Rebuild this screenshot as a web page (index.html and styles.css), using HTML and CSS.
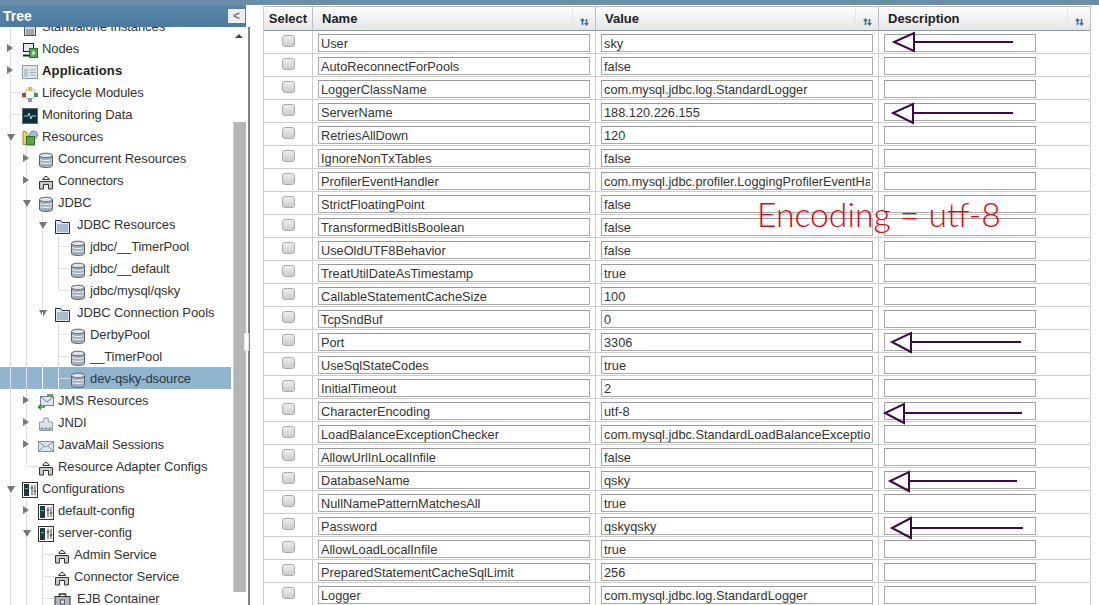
FILE: index.html
```html
<!DOCTYPE html>
<html>
<head>
<meta charset="UTF-8">
<title>Connection Pool Properties</title>
<link rel="stylesheet" href="styles.css">
</head>
<body>
<svg class="defs" width="0" height="0">
	<symbol id="db" viewBox="0 0 16 16">
		<path d="M1.500 3.500v10c0 1.200 2.900 2 6.500 2s6.500-.8 6.500-2v-10z" fill="#a3afba" stroke="#56626d"/>
		<ellipse cx="8" cy="3.500" rx="6.500" ry="2.300" fill="#dfe5ea" stroke="#56626d"/>
		<path d="M2 7.500c1 1.200 11 1.200 12 0M2 10.500c1 1.200 11 1.200 12 0" fill="none" stroke="#eef2f5"/>
	</symbol>
	<symbol id="folder" viewBox="0 0 16 16">
		<path d="M1 2.500h5l1.500 2H15v11H1z" fill="#dce7f0" stroke="#22303c"/>
		<path d="M2.500 6h11v8h-11z" fill="#a3bdd2"/>
	</symbol>
	<symbol id="conn" viewBox="0 0 16 16">
		<path d="M4.500 5.500L7 2.500h2l2.500 3z" fill="#e6e6e6" stroke="#333"/>
		<path d="M1.500 15V7.500h13V15h-4v-4.500h-5V15z" fill="#c9c9c9" stroke="#333"/>
	</symbol>
	<symbol id="cfg" viewBox="0 0 16 16">
		<rect x=".5" y=".5" width="15" height="15" fill="#fff" stroke="#333"/>
		<rect x="2" y="2" width="5" height="12" fill="#1f3a44"/>
		<rect x="3" y="6" width="3" height="1" fill="#5ccf8f"/>
		<path d="M10 3v10M13 3v10M8.500 6h3M11.500 9h3" stroke="#444" fill="none"/>
	</symbol>
	<symbol id="nodes" viewBox="0 0 16 16">
		<rect x="1.500" y="1.500" width="10" height="8" fill="#e4e8ea" stroke="#222"/>
		<path d="M1 13.500h9" stroke="#222" stroke-width="2"/>
		<rect x="7.500" y="6.500" width="8" height="9" fill="#4ea74a" stroke="#2c6d2a"/>
		<path d="M10.500 8.500l3 2.500-3 2.500z" fill="#fff"/>
	</symbol>
	<symbol id="apps" viewBox="0 0 16 16">
		<rect x=".5" y="1.500" width="15" height="13" fill="#dfe7ee" stroke="#8a9aa8"/>
		<rect x="2" y="5" width="4" height="8" fill="#b7c7d4"/>
		<path d="M7.500 6h6.500M7.500 8.500h6.500M7.500 11h6.500" stroke="#9db0c0"/>
	</symbol>
	<symbol id="life" viewBox="0 0 16 16">
		<circle cx="8" cy="8" r="5.500" fill="none" stroke="#9aa8b4"/>
		<rect x="6" y="1" width="4" height="4" fill="#e8b93a"/>
		<rect x="12" y="7" width="4" height="4" fill="#3c9a48"/>
		<rect x="6" y="12" width="4" height="4" fill="#8a99a8"/>
		<rect x="0" y="7" width="4" height="4" fill="#cf3a30"/>
	</symbol>
	<symbol id="mon" viewBox="0 0 16 16">
		<rect x=".5" y=".5" width="15" height="15" fill="#12303a" stroke="#666"/>
		<path d="M2 8h4l1-3 2 6 1-3h4" fill="none" stroke="#6fe0d0"/>
	</symbol>
	<symbol id="res" viewBox="0 0 16 16">
		<path d="M1 1.500h3l2 3v10H1z" fill="#f1cc62" stroke="#a8872c"/>
		<circle cx="11.500" cy="5" r="4" fill="#a9c3d8" stroke="#6c8aa2"/>
		<rect x="4.500" y="6.500" width="8" height="8.500" fill="#58a83f" stroke="#2f6d25"/>
	</symbol>
	<symbol id="jms" viewBox="0 0 16 16">
		<rect x="2.500" y="2.500" width="13" height="9" fill="#dbe6ee" stroke="#6e8496"/>
		<path d="M3 3l6 5 6-5" fill="none" stroke="#6e8496"/>
		<path d="M0 13h7M3 10.500L.5 13 3 15.500M9 1h6" stroke="#2f8a2a" stroke-width="1.500" fill="none"/>
	</symbol>
	<symbol id="jndi" viewBox="0 0 16 16">
		<path d="M6 2h4l1 4h3.500v8.500h-13V6H5z" fill="#d6e3ec" stroke="#8ba1b2"/>
		<path d="M3 14v-2h2v2M7 14v-2h2v2M11 14v-2h2v2" fill="none" stroke="#6e8496"/>
	</symbol>
	<symbol id="mail" viewBox="0 0 16 16">
		<rect x=".5" y="3.500" width="15" height="10" fill="#dbe6ee" stroke="#7f95a6"/>
		<path d="M1 4l7 5 7-5M1 13l5-5M15 13l-5-5" fill="none" stroke="#7f95a6"/>
	</symbol>
	<symbol id="std" viewBox="0 0 16 16">
		<rect x="2.500" y=".5" width="11" height="15" fill="#d5d5d5" stroke="#555"/>
		<path d="M4 10h8M4 12h8M4 14h8" stroke="#777"/>
	</symbol>
	<symbol id="ejb" viewBox="0 0 16 16">
		<path d="M5 4V2h6v2" fill="none" stroke="#333" stroke-width="1.500"/>
		<rect x=".5" y="4.500" width="15" height="11" fill="#aeb4bc" stroke="#333"/>
		<rect x="6" y="8" width="4" height="4" fill="#e4e8ec" stroke="#556"/>
	</symbol>
</svg>

<div class="topbar"></div>
<div class="page">
	<div class="side">
		<div class="side-head">
			<span class="side-title">Tree</span>
			<span class="collapse">&lt;</span>
		</div>
		<div class="side-body">
			<div class="tree">
				<ul class="root">
					<li><div class="row"><span class="tog leaf"></span><svg class="ico"><use href="#std"/></svg>Standalone Instances</div></li>
					<li><div class="row"><span class="tog closed"></span><svg class="ico"><use href="#nodes"/></svg>Nodes</div></li>
					<li><div class="row strong"><span class="tog closed"></span><svg class="ico"><use href="#apps"/></svg>Applications</div></li>
					<li><div class="row"><span class="tog leaf"></span><svg class="ico"><use href="#life"/></svg>Lifecycle Modules</div></li>
					<li><div class="row"><span class="tog leaf"></span><svg class="ico"><use href="#mon"/></svg>Monitoring Data</div></li>
					<li>
						<div class="row"><span class="tog opened"></span><svg class="ico"><use href="#res"/></svg>Resources</div>
						<ul class="sub">
							<li><div class="row"><span class="tog closed"></span><svg class="ico"><use href="#db"/></svg>Concurrent Resources</div></li>
							<li><div class="row"><span class="tog closed"></span><svg class="ico"><use href="#conn"/></svg>Connectors</div></li>
							<li>
								<div class="row"><span class="tog opened"></span><svg class="ico"><use href="#db"/></svg>JDBC</div>
								<ul class="sub">
									<li>
										<div class="row"><span class="tog opened"></span><svg class="ico wide"><use href="#folder"/></svg>JDBC Resources</div>
										<ul class="sub">
											<li><div class="row"><span class="tog leaf"></span><svg class="ico"><use href="#db"/></svg>jdbc/__TimerPool</div></li>
											<li><div class="row"><span class="tog leaf"></span><svg class="ico"><use href="#db"/></svg>jdbc/__default</div></li>
											<li class="end"><div class="row"><span class="tog leaf"></span><svg class="ico"><use href="#db"/></svg>jdbc/mysql/qsky</div></li>
										</ul>
									</li>
									<li class="end">
										<div class="row"><span class="tog opened"></span><svg class="ico wide"><use href="#folder"/></svg>JDBC Connection Pools</div>
										<ul class="sub">
											<li><div class="row"><span class="tog leaf"></span><svg class="ico"><use href="#db"/></svg>DerbyPool</div></li>
											<li><div class="row"><span class="tog leaf"></span><svg class="ico"><use href="#db"/></svg>__TimerPool</div></li>
											<li class="end"><div class="row sel"><span class="tog leaf"></span><svg class="ico"><use href="#db"/></svg>dev-qsky-dsource</div></li>
										</ul>
									</li>
								</ul>
							</li>
							<li><div class="row"><span class="tog closed"></span><svg class="ico"><use href="#jms"/></svg>JMS Resources</div></li>
							<li><div class="row"><span class="tog closed"></span><svg class="ico"><use href="#jndi"/></svg>JNDI</div></li>
							<li><div class="row"><span class="tog closed"></span><svg class="ico"><use href="#mail"/></svg>JavaMail Sessions</div></li>
							<li class="end"><div class="row"><span class="tog leaf"></span><svg class="ico"><use href="#conn"/></svg>Resource Adapter Configs</div></li>
						</ul>
					</li>
					<li>
						<div class="row"><span class="tog opened"></span><svg class="ico"><use href="#cfg"/></svg>Configurations</div>
						<ul class="sub">
							<li><div class="row"><span class="tog closed"></span><svg class="ico"><use href="#cfg"/></svg>default-config</div></li>
							<li>
								<div class="row"><span class="tog opened"></span><svg class="ico"><use href="#cfg"/></svg>server-config</div>
								<ul class="sub">
									<li><div class="row"><span class="tog leaf"></span><svg class="ico"><use href="#conn"/></svg>Admin Service</div></li>
									<li><div class="row"><span class="tog leaf"></span><svg class="ico"><use href="#conn"/></svg>Connector Service</div></li>
									<li><div class="row"><span class="tog leaf"></span><svg class="ico wide"><use href="#ejb"/></svg>EJB Container</div></li>
								</ul>
							</li>
						</ul>
					</li>
				</ul>
			</div>
			<div class="scroll">
				<span class="scroll-up"></span>
				<div class="thumb"></div>
			</div>
		</div>
	</div>
	<div class="split"><span class="grip"></span></div>

	<div class="main">
		<table class="props">
			<colgroup><col class="c-sel"><col class="c-val"><col class="c-val"><col class="c-desc"></colgroup>
			<thead>
				<tr>
					<th class="th-sel">Select</th>
					<th><div class="th-in"><span class="th-txt">Name</span><span class="sort"><svg width="9" height="8" viewBox="0 0 9 8"><path d="M2.500 0L5 3H3.300v4H1.700V3H0zM6.500 8L4 5h1.700V1h1.600v4H9z" fill="#3f6f96"/></svg></span></div></th>
					<th><div class="th-in"><span class="th-txt">Value</span><span class="sort"><svg width="9" height="8" viewBox="0 0 9 8"><path d="M2.500 0L5 3H3.300v4H1.700V3H0zM6.500 8L4 5h1.700V1h1.600v4H9z" fill="#3f6f96"/></svg></span></div></th>
					<th><div class="th-in"><span class="th-txt">Description</span><span class="sort"><svg width="9" height="8" viewBox="0 0 9 8"><path d="M2.500 0L5 3H3.300v4H1.700V3H0zM6.500 8L4 5h1.700V1h1.600v4H9z" fill="#3f6f96"/></svg></span></div></th>
				</tr>
			</thead>
			<tbody>
				<tr><td class="td-sel"><input class="chk" type="checkbox"></td><td><input class="txt" value="User"></td><td><input class="txt" value="sky"></td><td><input class="txt short"></td></tr>
				<tr><td class="td-sel"><input class="chk" type="checkbox"></td><td><input class="txt" value="AutoReconnectForPools"></td><td><input class="txt" value="false"></td><td><input class="txt short"></td></tr>
				<tr><td class="td-sel"><input class="chk" type="checkbox"></td><td><input class="txt" value="LoggerClassName"></td><td><input class="txt" value="com.mysql.jdbc.log.StandardLogger"></td><td><input class="txt short"></td></tr>
				<tr><td class="td-sel"><input class="chk" type="checkbox"></td><td><input class="txt" value="ServerName"></td><td><input class="txt" value="188.120.226.155"></td><td><input class="txt short"></td></tr>
				<tr><td class="td-sel"><input class="chk" type="checkbox"></td><td><input class="txt" value="RetriesAllDown"></td><td><input class="txt" value="120"></td><td><input class="txt short"></td></tr>
				<tr><td class="td-sel"><input class="chk" type="checkbox"></td><td><input class="txt" value="IgnoreNonTxTables"></td><td><input class="txt" value="false"></td><td><input class="txt short"></td></tr>
				<tr><td class="td-sel"><input class="chk" type="checkbox"></td><td><input class="txt" value="ProfilerEventHandler"></td><td><input class="txt" value="com.mysql.jdbc.profiler.LoggingProfilerEventHandler"></td><td><input class="txt short"></td></tr>
				<tr><td class="td-sel"><input class="chk" type="checkbox"></td><td><input class="txt" value="StrictFloatingPoint"></td><td><input class="txt" value="false"></td><td><input class="txt short"></td></tr>
				<tr><td class="td-sel"><input class="chk" type="checkbox"></td><td><input class="txt" value="TransformedBitIsBoolean"></td><td><input class="txt" value="false"></td><td><input class="txt short"></td></tr>
				<tr><td class="td-sel"><input class="chk" type="checkbox"></td><td><input class="txt" value="UseOldUTF8Behavior"></td><td><input class="txt" value="false"></td><td><input class="txt short"></td></tr>
				<tr><td class="td-sel"><input class="chk" type="checkbox"></td><td><input class="txt" value="TreatUtilDateAsTimestamp"></td><td><input class="txt" value="true"></td><td><input class="txt short"></td></tr>
				<tr><td class="td-sel"><input class="chk" type="checkbox"></td><td><input class="txt" value="CallableStatementCacheSize"></td><td><input class="txt" value="100"></td><td><input class="txt short"></td></tr>
				<tr><td class="td-sel"><input class="chk" type="checkbox"></td><td><input class="txt" value="TcpSndBuf"></td><td><input class="txt" value="0"></td><td><input class="txt short"></td></tr>
				<tr><td class="td-sel"><input class="chk" type="checkbox"></td><td><input class="txt" value="Port"></td><td><input class="txt" value="3306"></td><td><input class="txt short"></td></tr>
				<tr><td class="td-sel"><input class="chk" type="checkbox"></td><td><input class="txt" value="UseSqlStateCodes"></td><td><input class="txt" value="true"></td><td><input class="txt short"></td></tr>
				<tr><td class="td-sel"><input class="chk" type="checkbox"></td><td><input class="txt" value="InitialTimeout"></td><td><input class="txt" value="2"></td><td><input class="txt short"></td></tr>
				<tr><td class="td-sel"><input class="chk" type="checkbox"></td><td><input class="txt" value="CharacterEncoding"></td><td><input class="txt" value="utf-8"></td><td><input class="txt short"></td></tr>
				<tr><td class="td-sel"><input class="chk" type="checkbox"></td><td><input class="txt" value="LoadBalanceExceptionChecker"></td><td><input class="txt" value="com.mysql.jdbc.StandardLoadBalanceExceptionChecker"></td><td><input class="txt short"></td></tr>
				<tr><td class="td-sel"><input class="chk" type="checkbox"></td><td><input class="txt" value="AllowUrlInLocalInfile"></td><td><input class="txt" value="false"></td><td><input class="txt short"></td></tr>
				<tr><td class="td-sel"><input class="chk" type="checkbox"></td><td><input class="txt" value="DatabaseName"></td><td><input class="txt" value="qsky"></td><td><input class="txt short"></td></tr>
				<tr><td class="td-sel"><input class="chk" type="checkbox"></td><td><input class="txt" value="NullNamePatternMatchesAll"></td><td><input class="txt" value="true"></td><td><input class="txt short"></td></tr>
				<tr><td class="td-sel"><input class="chk" type="checkbox"></td><td><input class="txt" value="Password"></td><td><input class="txt" value="qskyqsky"></td><td><input class="txt short"></td></tr>
				<tr><td class="td-sel"><input class="chk" type="checkbox"></td><td><input class="txt" value="AllowLoadLocalInfile"></td><td><input class="txt" value="true"></td><td><input class="txt short"></td></tr>
				<tr><td class="td-sel"><input class="chk" type="checkbox"></td><td><input class="txt" value="PreparedStatementCacheSqlLimit"></td><td><input class="txt" value="256"></td><td><input class="txt short"></td></tr>
				<tr><td class="td-sel"><input class="chk" type="checkbox"></td><td><input class="txt" value="Logger"></td><td><input class="txt" value="com.mysql.jdbc.log.StandardLogger"></td><td><input class="txt short"></td></tr>
			</tbody>
		</table>
	</div>
</div>

<!-- hand drawn notes on top of the screenshot -->
<svg class="marks" width="1099" height="605" viewBox="0 0 1099 605">
	<path d="M914 33v18l-20-9zM914 42h99"/>
	<path d="M913 104v19l-20-10zM913 113h100"/>
	<path d="M911 333v19l-19-10zM911 342h110"/>
	<path d="M904 404v19l-19-10zM904 413h118"/>
	<path d="M909 472v19l-19-10zM909 481h108"/>
	<path d="M911 518v20l-19-10zM911 528h112"/>
</svg>
<div class="note">Encoding = utf-8</div>
</body>
</html>
```

FILE: styles.css
```css
html, body{margin:0; padding:0; height:100%; overflow:hidden; background:#fff}
body{position:relative; font-family:"Liberation Sans", Arial, sans-serif; color:#333}
ul{list-style:none; margin:0; padding:0}
.defs{display:block}

.topbar{height:5px; background:#6a8ea8}
.page{display:flex; height:600px}

/* left tree */
.side{width:246px; display:flex; flex-direction:column; flex:none}
.side-head{height:22px; display:flex; align-items:center; justify-content:space-between; background:linear-gradient(#5a87a9, #4c7a9e); padding:0 1px 0 3px}
.side-title{color:#fff; font-weight:bold; font-size:14px}
.collapse{width:17px; height:14px; background:#eceff1; color:#777; font-size:12px; font-weight:bold; line-height:14px; text-align:center}
.side-body{flex:1; display:flex; min-height:0}
.tree{flex:1; overflow:hidden; min-width:0; isolation:isolate}
.root{margin:-12px 0 0 10px; border-left:1px solid #ddd}
.sub{margin-left:15px; border-left:1px solid #ddd}
.end{position:relative}
.end::after{content:""; position:absolute; left:-1px; top:11px; bottom:0; width:1px; background:#fff}
.row{position:relative; display:flex; align-items:center; height:22px; font-size:13px; white-space:nowrap; letter-spacing:-.1px}
.row.strong{font-weight:bold; color:#222; letter-spacing:.2px}
.sel::before{content:""; position:absolute; z-index:-1; left:-59px; width:231px; top:0; bottom:0; background:#8fb5d0}
.tog{position:relative; width:15px; margin-left:-4px; flex:none; height:22px}
.closed::before{content:""; position:absolute; left:0; top:7px; border-left:6px solid #777; border-top:4px solid transparent; border-bottom:4px solid transparent}
.opened::before{content:""; position:absolute; left:0; top:9px; border-top:7px solid #777; border-left:4px solid transparent; border-right:4px solid transparent}
.leaf::before{content:""; position:absolute; left:4px; top:11px; width:11px; height:1px; background:#ddd}
.ico{position:relative; width:16px; height:16px; margin-right:4px; flex:none; top:2px}
.ico.wide{width:17px; margin-right:6px}

.scroll{width:14px; flex:none; position:relative}
.scroll-up{display:block; width:0; margin:7px 0 0 3px; border-bottom:4px solid #444; border-left:4px solid transparent; border-right:4px solid transparent}
.thumb{margin:84px 0 0 1px; height:470px; background:#b5b5b5; border-left:1px solid #ccc}

.split{width:2px; margin:22px 0 0 2px; background:#808080; position:relative; flex:none}
.grip{position:absolute; left:-4px; top:306px; width:3px; height:16px; border:1px solid #e8e8e8; background:#fff}

/* property table */
.main{flex:1; padding:1px 0 0 13px; min-width:0; overflow:hidden}
.props{border-collapse:separate; border-spacing:0; table-layout:fixed; width:828px; border-left:1px solid #ccc; border-top:1px solid #bbb}
.c-sel{width:49px}
.c-val{width:283px}
.c-desc{width:212px}
.props th{height:23px; padding:0; background:linear-gradient(#fdfdfd, #e3e6e9); border-bottom:1px solid #8c9aa6; border-right:1px solid #b8c0c6; font-size:13px; color:#222; text-align:left}
.th-sel{text-align:center !important}
.th-in{display:flex; height:23px; align-items:center}
.th-txt{flex:1; padding-left:9px; margin-top:-1px}
.sort{width:23px; height:23px; border-left:1px solid #e4e6e8; display:flex; align-items:flex-end; justify-content:center; padding-bottom:4px; box-sizing:border-box}
.props td{height:23px; padding:3px 0 0 5px; box-sizing:border-box; border-bottom:1px solid #ccc; border-right:1px solid #ccc; vertical-align:top; line-height:0}
.td-sel{padding:4px 0 0 18px !important}
.chk{appearance:none; -webkit-appearance:none; display:block; margin:0; width:13px; height:12px; border:1px solid #aaa; border-radius:3px; background:linear-gradient(#eee, #ccc)}
.txt{display:block; box-sizing:border-box; width:272px; height:18px; margin:0; padding:0 2px; border:1px solid #aaa; border-top-color:#999; background:#fff; font-family:"Liberation Sans", Arial, sans-serif; font-size:12.750px; color:#333}
.txt.short{width:152px}

/* notes */
.marks{position:absolute; left:0; top:0; pointer-events:none}
.marks path{fill:none; stroke:#3c0a46; stroke-width:2}
.note{position:absolute; left:757px; top:194px; font-family:Lato, sans-serif; font-weight:300; font-size:33.700px; line-height:40px; color:#e2060c; white-space:nowrap}
```
